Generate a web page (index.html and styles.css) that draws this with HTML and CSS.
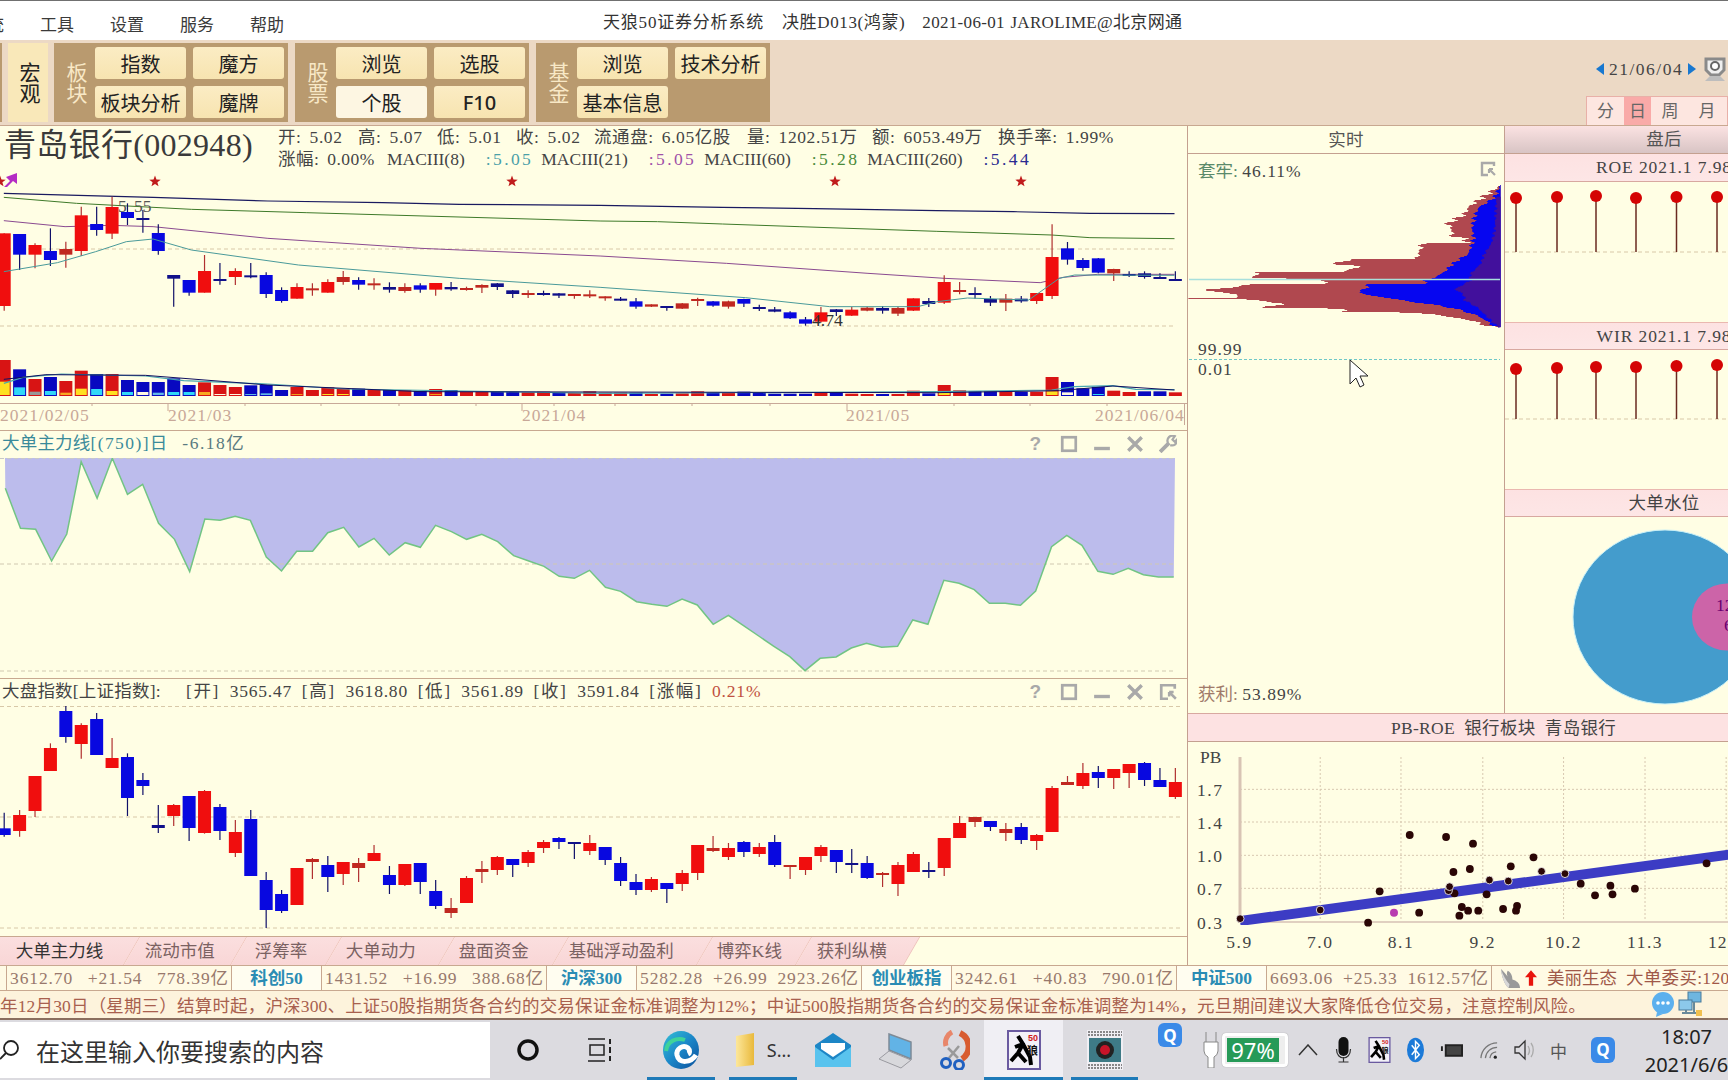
FILE: index.html
```html
<!DOCTYPE html>
<html lang="zh-CN">
<head>
<meta charset="utf-8">
<title>天狼50证券分析系统</title>
<link rel="stylesheet" href="styles.css">
</head>
<body>
<svg class="defs" width="0" height="0" aria-hidden="true">
  <defs>
    <linearGradient id="edgeGrad" x1="0" y1="0" x2="1" y2="1"><stop offset="0" stop-color="#35c1d6"/><stop offset=".5" stop-color="#1b86c8"/><stop offset="1" stop-color="#0c4f9a"/></linearGradient>
    <linearGradient id="folderGrad" x1="0" y1="0" x2="1" y2="0"><stop offset="0" stop-color="#fde79a"/><stop offset="1" stop-color="#e9b93c"/></linearGradient>
    <symbol id="wolf" viewBox="0 0 34 40">
      <rect x="1" y="1" width="32" height="38" fill="#f3f1f8" stroke="#6a5aa0" stroke-width="2"/>
      <path d="M11 6l5 8-5 9-7 8M16 14l7 13 1 8M11 23l8 9M16 14l-8 3" fill="none" stroke="#000" stroke-width="4"/>
      <text x="21" y="11" class="wolf-num">50</text>
      <text x="20" y="25" class="wolf-char">狼</text>
    </symbol>
    <symbol id="restore" viewBox="0 0 16 16">
      <path d="M14 5V2H2v12h6" fill="none" stroke="#a9a9a9" stroke-width="2.4"/>
      <path d="M9 8l6 6M9 8v4M9 8h4" fill="none" stroke="#a9a9a9" stroke-width="2.2"/>
    </symbol>
  </defs>
</svg>
<div class="page">
  <header class="menu">
    <nav class="menu-items"><span>系统</span><span>工具</span><span>设置</span><span>服务</span><span>帮助</span></nav>
    <div class="app-title"><span class="ta">天狼50证券分析系统</span><span class="tb">决胜D013(鸿蒙)</span><span class="tc">2021-06-01 JAROLIME@北京网通</span></div>
  </header>

  <section class="toolbar">
    <div class="sliver"></div>
    <button class="macro">宏观</button>
    <div class="group">
      <div class="group-label">板块</div>
      <button class="tbtn">指数</button><button class="tbtn">魔方</button>
      <button class="tbtn">板块分析</button><button class="tbtn">魔牌</button>
    </div>
    <div class="group">
      <div class="group-label">股票</div>
      <button class="tbtn">浏览</button><button class="tbtn">选股</button>
      <button class="tbtn active">个股</button><button class="tbtn latin">F10</button>
    </div>
    <div class="group">
      <div class="group-label">基金</div>
      <button class="tbtn">浏览</button><button class="tbtn">技术分析</button>
      <button class="tbtn">基本信息</button>
    </div>
    <div class="tool-right">
      <div class="date-row">
        <span class="arrow-left"></span><span class="date">21/06/04</span><span class="arrow-right"></span>
        <svg class="cal" viewBox="0 0 24 26"><path d="M3 3h18v11l-5 5H8l-5-5z" fill="#efefef" stroke="#8a8a8a" stroke-width="3"/><circle cx="12" cy="10" r="4" fill="#fff" stroke="#666" stroke-width="2"/><path d="M7 20l-5 5h20l-5-5" fill="#bdbdbd"/></svg>
      </div>
      <div class="periods"><span class="p1">分</span><span class="p2">日</span><span class="p3">周</span><span class="p4">月</span></div>
    </div>
  </section>

  <main class="main">
    <section class="left">
      <header class="stock-head">
        <h1 class="stock-name">青岛银行(002948)</h1>
        <div class="stock-info">
          <div class="stats">
            <span>开: 5.02</span><span>高: 5.07</span><span>低: 5.01</span><span>收: 5.02</span><span>流通盘: 6.05亿股</span><span>量: 1202.51万</span><span>额: 6053.49万</span><span>换手率: 1.99%</span>
          </div>
          <div class="macs">
            <span class="chg">涨幅: 0.00%</span>
            <span class="mac">MACIII(8)</span><span class="val v8">:5.05</span>
            <span class="mac">MACIII(21)</span><span class="val v21">:5.05</span>
            <span class="mac">MACIII(60)</span><span class="val v60">:5.28</span>
            <span class="mac">MACIII(260)</span><span class="val v260">:5.44</span>
          </div>
        </div>
      </header>
      <svg id="kline" class="chart c1" width="1187" height="260"></svg>

      <div class="panel-head">
        <span class="ptitle teal">大单主力线<span class="wide">[(750)]日</span> <em>-6.18亿</em></span>
        <div class="ptools">
          <span class="qmark">?</span>
          <svg viewBox="0 0 16 16"><rect x="2" y="2" width="12" height="12" fill="none" stroke="#a9a9a9" stroke-width="2.4"/></svg>
          <svg viewBox="0 0 16 16"><path d="M1 12h14" stroke="#a9a9a9" stroke-width="3"/></svg>
          <svg viewBox="0 0 16 16"><path d="M2 2l12 12M14 2L2 14" stroke="#a9a9a9" stroke-width="3"/></svg>
          <svg viewBox="0 0 16 16"><path d="M1 15l8-8" stroke="#a9a9a9" stroke-width="3.4"/><path d="M8 7a4.500 4.500 0 0 1 6-6l-2 3 2 2 2-2a4.500 4.500 0 0 1-6 5" fill="none" stroke="#a9a9a9" stroke-width="2"/></svg>
        </div>
      </div>
      <svg id="flow" class="chart" width="1187" height="220"></svg>

      <div class="panel-head">
        <span class="ptitle index-title"><span class="it-name">大盘指数[上证指数]:</span><span class="br">[开]</span><span class="num">3565.47</span><span class="br">[高]</span><span class="num">3618.80</span><span class="br">[低]</span><span class="num">3561.89</span><span class="br">[收]</span><span class="num">3591.84</span><span class="br">[涨幅]</span><b class="num">0.21%</b></span>
        <div class="ptools">
          <span class="qmark">?</span>
          <svg viewBox="0 0 16 16"><rect x="2" y="2" width="12" height="12" fill="none" stroke="#a9a9a9" stroke-width="2.4"/></svg>
          <svg viewBox="0 0 16 16"><path d="M1 12h14" stroke="#a9a9a9" stroke-width="3"/></svg>
          <svg viewBox="0 0 16 16"><path d="M2 2l12 12M14 2L2 14" stroke="#a9a9a9" stroke-width="3"/></svg>
          <svg viewBox="0 0 16 16"><use href="#restore"/></svg>
        </div>
      </div>
      <svg id="index" class="chart" width="1187" height="230"></svg>

      <div class="tabs">
        <div class="tab t1"><span class="on">大单主力线</span></div>
        <div class="tab t2"><span>流动市值</span></div>
        <div class="tab t3"><span>浮筹率</span></div>
        <div class="tab t4"><span>大单动力</span></div>
        <div class="tab t5"><span>盘面资金</span></div>
        <div class="tab t6"><span>基础浮动盈利</span></div>
        <div class="tab t7"><span>博弈K线</span></div>
        <div class="tab t8"><span>获利纵横</span></div>
      </div>
    </section>

    <section class="right">
      <div class="right-top">
        <div class="mid">
          <div class="head plain">实时</div>
          <div class="mid-row"><span class="trap">套牢: <i>46.11%</i></span><svg class="restore" viewBox="0 0 16 16"><use href="#restore"/></svg></div>
          <svg id="chips" class="chart" width="316" height="210"></svg>
          <div class="mid-row foot"><span class="profit">获利: <i>53.89%</i></span></div>
        </div>
        <div class="side">
          <div class="head grad">盘后</div>
          <div class="head wide-head">ROE 2021.1 7.98</div>
          <svg id="roe" class="chart" width="319" height="140"></svg>
          <div class="head wide-head">WIR 2021.1 7.98</div>
          <svg id="wir" class="chart" width="319" height="139"></svg>
          <div class="head">大单水位</div>
          <svg id="pie" class="chart" width="319" height="196"></svg>
        </div>
      </div>
      <div class="head pb">PB-ROE&nbsp;&nbsp;银行板块&nbsp;&nbsp;青岛银行</div>
      <svg id="scatter" class="chart" width="635" height="223"></svg>
    </section>
  </main>

  <section class="ticker">
    <div class="nums n1"><span>3612.70</span><span>+21.54</span><span>778.39亿</span></div>
    <div class="name w1">科创50</div>
    <div class="nums n2"><span>1431.52</span><span>+16.99</span><span>388.68亿</span></div>
    <div class="name w1">沪深300</div>
    <div class="nums n2"><span>5282.28</span><span>+26.99</span><span>2923.26亿</span></div>
    <div class="name w2">创业板指</div>
    <div class="nums n2"><span>3242.61</span><span>+40.83</span><span>790.01亿</span></div>
    <div class="name w1">中证500</div>
    <div class="nums n2"><span>6693.06</span><span>+25.33</span><span>1612.57亿</span></div>
    <div class="quote">
      <svg class="wing" viewBox="0 0 24 22"><path d="M2 1c1 8 3 15 8 20h12c0-5-4-8-8-9 0-4-2-8-5-9-1 2-1 4 0 6C7 6 4 3 2 1z" fill="#9a9a9a"/><path d="M2 1c1 8 3 15 8 20l1-4C7 13 4 7 2 1z" fill="#d8d8d8"/></svg>
      <svg class="up" viewBox="0 0 14 18"><path d="M7 0l7 8H9.500v10h-5V8H0z" fill="#e8140c"/></svg>
      <span class="q1">美丽生态</span><span class="q2">大单委买:120</span>
    </div>
  </section>

  <section class="notice">
    <p>年12月30日（星期三）结算时起，沪深300、上证50股指期货各合约的交易保证金标准调整为12%；中证500股指期货各合约的交易保证金标准调整为14%，元旦期间建议大家降低仓位交易，注意控制风险。</p>
    <div class="notice-icons">
      <svg viewBox="0 0 26 26"><circle cx="13" cy="12" r="11" fill="#5cb0ee"/><path d="M7 21l-1 5 7-3z" fill="#5cb0ee"/><circle cx="8" cy="12" r="1.800" fill="#fff"/><circle cx="13" cy="12" r="1.800" fill="#fff"/><circle cx="18" cy="12" r="1.800" fill="#fff"/></svg>
      <svg viewBox="0 0 26 26"><rect x="11" y="1" width="13" height="10" fill="#6fb6e0" stroke="#4a7a9a"/><rect x="2" y="9" width="13" height="10" fill="#8cc8ea" stroke="#4a7a9a"/><path d="M5 22h16M9 19v3M17 11v11" stroke="#6a8a9a" stroke-width="2"/><rect x="19" y="19" width="6" height="6" fill="#f0c050"/></svg>
    </div>
  </section>

  <footer class="taskbar">
    <div class="searchbox">
      <svg class="sicon" viewBox="0 0 20 20"><circle cx="11" cy="8" r="7" fill="none" stroke="#222" stroke-width="1.800"/><path d="M6 13l-6 6" stroke="#222" stroke-width="1.800"/></svg>
      <span>在这里输入你要搜索的内容</span>
    </div>
    <div class="slot s-cortana"><svg class="i24" viewBox="0 0 24 24"><circle cx="12" cy="12" r="9" fill="none" stroke="#111" stroke-width="3.500"/></svg></div>
    <div class="slot s-task"><svg class="i-task" viewBox="0 0 26 26"><path d="M1 2h17M1 24h17M3 8h14v10H3z" fill="none" stroke="#222" stroke-width="1.500"/><path d="M23 2v5M23 10v6M23 19v5" stroke="#222" stroke-width="2"/></svg></div>
    <div class="slot s-run"><svg class="i-edge" viewBox="0 0 36 38"><ellipse cx="18" cy="19" rx="18" ry="19" fill="url(#edgeGrad)"/><path d="M33 24c-5 8-17 9-19 0-1-6 6-11 11-7 2 2 2 5 0 6" fill="none" stroke="#fff" stroke-width="5"/><path d="M3 20C4 10 14 6 22 9" fill="none" stroke="#3fd39a" stroke-width="4"/></svg></div>
    <div class="slot s-run s-folder"><svg class="i-folder" viewBox="0 0 20 34"><path d="M1 3l18-3v32l-18 2z" fill="url(#folderGrad)"/></svg><span>S...</span></div>
    <div class="slot s-mail"><svg class="i-mail" viewBox="0 0 36 34"><path d="M18 0l18 12v22H0V12z" fill="#1d86c6"/><path d="M0 14l18 13 18-13v20H0z" fill="#59c3ee"/><path d="M6 10h24v6l-12 8-12-8z" fill="#fff"/></svg></div>
    <div class="slot s-laptop"><svg class="i-laptop" viewBox="0 0 34 38"><path d="M10 3l22 8v17L10 19z" fill="#62b3e6" stroke="#7e8a96" stroke-width="1.500"/><path d="M0 28l10-8 22 9-10 8z" fill="#d8d8dc" stroke="#9a9aa0"/></svg></div>
    <div class="slot s-scissors"><svg class="i-sc" viewBox="0 0 32 40"><path d="M22 3a15 15 0 0 1 2 26" fill="none" stroke="#d85c30" stroke-width="6"/><path d="M14 2a12 12 0 0 0-6 14" fill="none" stroke="#e8866a" stroke-width="5"/><path d="M10 18l10 10M21 16l-10 12" stroke="#999" stroke-width="2.500"/><circle cx="8" cy="33" r="4.500" fill="none" stroke="#2060c0" stroke-width="3"/><circle cx="21" cy="35" r="4.500" fill="none" stroke="#2060c0" stroke-width="3"/></svg></div>
    <div class="slot s-active"><svg class="i-wolf"><use href="#wolf"/></svg></div>
    <div class="slot s-film"><svg class="i-film" viewBox="0 0 36 40"><rect width="36" height="40" fill="#f0eff4"/><path d="M1 2h34M1 5h34M1 35h34M1 38h34" stroke="#666" stroke-width="1.500" stroke-dasharray="2 1"/><rect x="2" y="8" width="32" height="24" fill="#3e7a86"/><circle cx="18" cy="20" r="9" fill="#222"/><circle cx="18" cy="20" r="5" fill="#c81428"/></svg></div>
    <div class="qbadge big"><span>Q</span></div>
    <div class="tray">
      <svg class="i-plug" viewBox="0 0 16 36"><path d="M3 0v10M13 0v10M1 10h14v9a7 7 0 0 1-4 6v11H5V25a7 7 0 0 1-4-6z" fill="#fff" stroke="#888"/></svg>
      <div class="battery"><div class="batt-fill">97%</div></div>
      <svg class="i-caret" viewBox="0 0 20 12"><path d="M1 11l9-10 9 10" fill="none" stroke="#333" stroke-width="1.500"/></svg>
      <svg class="i-mic" viewBox="0 0 16 26"><rect x="3" y="0" width="10" height="19" rx="5" fill="#111"/><path d="M1 12c0 12 14 12 14 0M8 20v5M3 25h10" fill="none" stroke="#333" stroke-width="1.200"/></svg>
      <svg class="i-wolfs"><use href="#wolf"/></svg>
      <svg class="i-bt" viewBox="0 0 18 26"><ellipse cx="9" cy="13" rx="9" ry="13" fill="#1c7ad8"/><path d="M5 8l8 10-4 4V4l4 4-8 10" fill="none" stroke="#fff" stroke-width="1.500"/></svg>
      <svg class="i-smb" viewBox="0 0 24 16"><path d="M1 4v5h2V4zM5 2h19v13H5z" fill="#222"/><rect x="7" y="4" width="15" height="9" fill="#444"/></svg>
      <svg class="i-wifi" viewBox="0 0 20 20"><path d="M1 19A18 18 0 0 1 19 2M6 19A13 13 0 0 1 19 7M11 19a8 8 0 0 1 7-7" fill="none" stroke="#777" stroke-width="1.400"/><circle cx="17" cy="18" r="1.800" fill="#222"/></svg>
      <svg class="i-spk" viewBox="0 0 22 22"><path d="M2 8h4l6-6v18l-6-6H2z" fill="none" stroke="#333" stroke-width="1.300"/><path d="M15 7c2 3 2 6 0 9M18 4c3 4 3 10 0 14" fill="none" stroke="#aaa" stroke-width="1.300"/></svg>
      <span class="ime">中</span>
      <div class="qbadge"><span>Q</span></div>
    </div>
    <div class="clock"><span>18:07</span><span>2021/6/6</span></div>
  </footer>
</div>
<script src="charts.js"></script>
</body>
</html>
```
FILE: styles.css
```css
* { box-sizing: border-box; }
html, body { margin: 0; padding: 0; width: 1728px; height: 1080px; overflow: hidden; background: #fffee4; }
body { font-family: "Liberation Serif", "Noto Sans CJK SC", serif; font-size: 17.5px; color: #444; }
.defs { position: absolute; }
.page { width: 1728px; height: 1080px; overflow: hidden; display: flex; flex-direction: column; }
h1 { margin: 0; font-weight: 400; }
em, i { font-style: normal; }
button { font: inherit; border: 0; padding: 0; }
.wolf-num { font: 700 9px "Liberation Sans", sans-serif; fill: #d01818; }
.wolf-char { font: 700 11px "Noto Sans CJK SC", sans-serif; fill: #111; }

/* menu */
.menu { flex: 0 0 40px; display: flex; align-items: center; background: #fff; border-top: 1px solid #707070; font-size: 17px; color: #3a3a3a; padding-top: 6px; }
.menu-items { display: flex; gap: 36px; margin-left: -30px; width: 314px; flex: none; }
.menu-items span { white-space: nowrap; }
.app-title { margin-left: 319px; white-space: nowrap; color: #333; padding-bottom: 6px; font-size: 17px; display: flex; align-items: baseline; }
.ta { letter-spacing: .8px; }
.tb { letter-spacing: .62px; margin-left: 18px; }
.tc { letter-spacing: .32px; margin-left: 17px; word-spacing: 1px; }

/* toolbar */
.toolbar { flex: 0 0 85px; display: flex; align-items: stretch; gap: 6px; background: #ecd9c5; padding-top: 3px; padding-bottom: 3px; }
.sliver { width: 2px; background: #b99a6f; }
.macro { width: 40px; background: #f9e8b9; color: #222; font-size: 21px; writing-mode: vertical-rl; line-height: 40px; text-align: center; }
.group { display: grid; grid-template-columns: 41px 91px 98px; grid-template-rows: 32px 32px; row-gap: 7px; background: #b99a6f; padding: 4px 4px 4px 0; width: 234px; }
.group + .group { margin-left: 1px; }
.group .tbtn:nth-of-type(even) { margin-left: 7px; width: 91px; }
.group-label { grid-row: 1 / 3; color: #f8e8c6; font-size: 21px; writing-mode: vertical-rl; line-height: 41px; text-align: center; }
.tbtn { background: linear-gradient(#fbecc4, #f7e4b0); border-radius: 3px; color: #222; font-size: 20px; white-space: nowrap; }
.tbtn.active { background: #fdf6e2; }
.tbtn.latin { font-family: "Noto Sans", sans-serif; font-weight: 500; }
.tool-right { margin-left: auto; width: 142px; flex: none; display: flex; flex-direction: column; justify-content: flex-end; margin-bottom: -3px; }
.date-row { display: flex; align-items: center; gap: 5px; height: 28px; margin-bottom: 13px; margin-left: 10px; white-space: nowrap; }
.date { color: #444; letter-spacing: 1.5px; font-size: 17.5px; }
.arrow-left { width: 0; height: 0; border: 6px solid transparent; border-right: 8px solid #1878d0; border-left: 0; flex: none; }
.arrow-right { width: 0; height: 0; border: 6px solid transparent; border-left: 8px solid #1878d0; border-right: 0; flex: none; }
.cal { width: 24px; height: 26px; flex: none; margin-left: 2px; }
.periods { height: 29px; display: flex; border: 1px solid #e8b0a8; border-bottom: 0; background: #fde6e0; color: #666; line-height: 29px; text-align: center; font-size: 17px; }
.p1 { width: 37px; } .p2 { width: 27px; background: #f9aaa8; } .p3 { width: 38px; } .p4 { width: 36px; }

/* main */
.main { flex: 0 0 840px; width: 1823px; display: grid; grid-template-columns: 1188px 635px; border-top: 1px solid #c8a890; background: #fffee4; }
.chart { display: block; }
.chart text { font-family: "Liberation Serif", "Noto Sans CJK SC", serif; font-size: 17.5px; }
.left { border-right: 1px solid #c4a090; display: flex; flex-direction: column; min-width: 0; }
.stock-head { height: 44px; display: flex; }
.stock-name { font-size: 32px; line-height: 38px; width: 278px; flex: none; padding-left: 4px; color: #3a3a3a; white-space: nowrap; letter-spacing: .3px; }
.stock-info { line-height: 22px; }
.stats { display: grid; grid-template-columns: 80px 79px 79px 78px 153px 125px 126px auto; white-space: nowrap; word-spacing: 3px; letter-spacing: .6px; }
.macs { display: flex; white-space: nowrap; }
.chg { width: 109px; word-spacing: 3px; letter-spacing: .5px; }
.mac { margin-right: 21px; }
.val { margin-right: 8px; letter-spacing: 2.4px; }
.v8 { color: #4aa0a8; } .v21 { color: #a050a8; } .v60 { color: #4a8a3a; } .v260 { color: #2a2a90; }
.panel-head { height: 28px; border-top: 1px solid #c8a890; display: flex; align-items: center; white-space: nowrap; padding-left: 2px; letter-spacing: .2px; }
.ptitle { padding-bottom: 6px; }
.ptitle b { font-weight: 400; color: #c05040; }
.teal { color: #3a8a9a; }
.teal .wide { letter-spacing: 1.4px; }
.teal em { color: #5a7a80; margin-left: 9px; letter-spacing: 1.5px; }
.index-title { display: flex; align-items: baseline; }
.it-name { width: 184px; }
.br { letter-spacing: 1.6px; margin-right: 9.7px; }
.num { letter-spacing: .8px; margin-right: 9.7px; }
.ptools { margin-left: auto; display: flex; align-items: center; padding-right: 3px; padding-bottom: 2px; }
.ptools svg { width: 18px; height: 18px; margin: 0 7.5px; }
.qmark { width: 33px; text-align: center; color: #a9a9a9; font: 700 19px "Liberation Sans", sans-serif; }
.tabs { height: 29px; border-top: 1px solid #c8a890; display: flex; overflow: hidden; }
.tab { transform: skewX(-30deg); background: linear-gradient(#fbdfdf, #f9d6d6); border-right: 1px solid #eebcbc; height: 28px; display: flex; align-items: center; justify-content: center; font-size: 17.5px; color: #7a6262; padding-bottom: 4px; }
.tab span { transform: skewX(30deg); white-space: nowrap; display: block; }
.tab .on { color: #333; }
.t1 { width: 150px; margin-left: -18px; padding-left: 4px; } .t2 { width: 107px; padding-right: 13px; } .t3 { width: 95px; padding-right: 11px; } .t4 { width: 113px; padding-right: 20px; } .t5 { width: 114px; padding-right: 22px; } .t6 { width: 144px; padding-right: 24px; } .t7 { width: 99px; padding-right: 11px; } .t8 { width: 108px; padding-right: 13px; }

/* right */
.right { display: flex; flex-direction: column; min-width: 0; }
.right-top { display: grid; grid-template-columns: 316px 319px; height: 587px; }
.mid { display: flex; flex-direction: column; min-width: 0; }
.head { height: 28px; line-height: 27px; text-align: center; background: linear-gradient(#fde2e2, #fde6e6); border-bottom: 1px solid #d8a8a0; border-top: 1px solid #eab8b0; color: #444; white-space: nowrap; letter-spacing: .3px; }
.head.wide-head { letter-spacing: .9px; }
.head.plain { background: #fffee4; border-top: 0; border-bottom: 1px solid #c4a090; color: #555; line-height: 29px; }
.head.grad { background: linear-gradient(#fbe2e2, #d8c4c4); border-top: 0; border-bottom: 1px solid #c4a090; color: #555; }
.side .head:nth-of-type(2) { border-top: 0; }
.side { border-left: 1px solid #c4a090; min-width: 0; }
.mid-row { display: flex; justify-content: space-between; align-items: center; height: 30px; padding: 0 8px 0 10px; }
.trap { color: #5a8a6a; }
.trap i, .profit i { color: #444; letter-spacing: 1px; }
.profit { color: #a07a6a; }
.restore { width: 16px; height: 16px; }
.foot { margin-top: auto; height: 38px; padding: 0 8px 3px 10px; }
.head.pb { flex: none; height: 29px; line-height: 28px; background: #fde2e2; border-top: 1px solid #d8a8a0; border-bottom: 1px solid #c4a090; padding-right: 4px; }

/* ticker */
.ticker { flex: 0 0 26px; display: flex; background: #fffae4; border-top: 1px solid #c8a890; border-bottom: 1px solid #c8a890; line-height: 25px; white-space: nowrap; overflow: hidden; }
.nums { display: flex; justify-content: space-between; width: 225px; padding: 0 2px 0 3px; color: #98786c; border-left: 1px solid #c8a890; letter-spacing: .9px; flex: none; overflow: hidden; }
.n1 { margin-left: 6px; }
.name { color: #2a8cb4; text-align: center; font-size: 17.5px; font-weight: 700; border-left: 1px solid #c8a890; background: #fffdf0; flex: none; }
.w1, .w2 { width: 90px; }
.quote { border-left: 1px solid #c8a890; flex: 1; display: flex; align-items: center; padding-left: 7px; color: #a06a5c; min-width: 0; overflow: hidden; }
.wing { width: 23px; height: 21px; flex: none; }
.up { width: 12px; height: 16px; flex: none; margin-left: 3px; }
.q1 { margin-left: 10px; color: #a05848; }
.q2 { margin-left: 9px; color: #a05848; letter-spacing: .3px; }

/* notice */
.notice { flex: 0 0 29px; display: flex; align-items: center; background: #fdf3dc; border-bottom: 2px solid #8a6e5e; overflow: hidden; color: #a8604e; white-space: nowrap; }
.notice p { margin: 0; letter-spacing: .17px; }
.notice-icons { position: absolute; left: 1650px; top: 991px; display: flex; gap: 1px; }
.notice-icons svg { width: 26px; height: 26px; }

/* taskbar */
.taskbar { flex: 1; display: flex; background: #dcdbe0; align-items: stretch; position: relative; }
.searchbox { width: 490px; height: 56px; margin-top: 2px; background: #fff; display: flex; align-items: center; flex: none; color: #333; font: 24px "Noto Sans CJK SC", sans-serif; }
.sicon { width: 20px; height: 20px; margin-right: 16px; flex: none; }
.slot { flex: none; display: flex; align-items: center; justify-content: center; height: 60px; }
.s-cortana { width: 76px; } .i24 { width: 24px; height: 24px; }
.s-task { width: 68px; margin-right: 13px; } .i-task { width: 26px; height: 26px; }
.s-run { width: 68px; border-bottom: 3px solid #1e7ab8; padding-top: 3px; }
.s-folder { margin-left: 14px; gap: 12px; font: 18px "Noto Sans", sans-serif; color: #333; }
.i-edge { width: 36px; height: 38px; } .i-folder { width: 20px; height: 34px; }
.s-mail { width: 72px; } .i-mail { width: 36px; height: 34px; }
.s-laptop { width: 54px; } .i-laptop { width: 34px; height: 38px; }
.s-scissors { width: 61px; } .i-sc { width: 32px; height: 40px; }
.s-active { width: 79px; background: #f0eff4; border-bottom: 3px solid #1e7ab8; padding-top: 3px; } .i-wolf { width: 34px; height: 40px; }
.s-film { width: 67px; margin-left: 8px; border-bottom: 3px solid #1e7ab8; padding-top: 3px; } .i-film { width: 36px; height: 40px; }
.qbadge { width: 24px; height: 26px; background: #3a8ae8; border-radius: 6px; color: #fff; font: 700 17px "Noto Sans", sans-serif; text-align: center; line-height: 25px; flex: none; }
.qbadge.big { margin: 3px 0 0 20px; height: 24px; }
.tray { position: absolute; left: 1203px; top: 12px; height: 36px; display: flex; align-items: center; gap: 16px; }
.i-plug { width: 16px; height: 36px; }
.battery { width: 66px; height: 34px; margin-left: -13px; border: 3px solid #fff; border-radius: 4px; padding: 2px; background: #eee; box-shadow: 0 0 1px #888; }
.batt-fill { height: 100%; width: 52px; background: #269a58; color: #fff; font: 22px/24px "Noto Sans", sans-serif; text-align: center; white-space: nowrap; }
.i-caret { width: 20px; height: 12px; margin-left: -6px; margin-right: 1px; }
.i-mic { width: 17px; height: 26px; }
.i-wolfs { width: 23px; height: 26px; }
.i-bt { width: 17px; height: 26px; }
.i-smb { width: 23px; height: 16px; }
.i-wifi { width: 18px; height: 20px; margin-left: 1px; margin-right: -1px; }
.i-spk { width: 22px; height: 22px; }
.ime { font: 17px "Noto Sans CJK SC", sans-serif; color: #555; margin-left: -1px; }
.tray .qbadge { margin-left: 8px; }
.clock { position: absolute; left: 1645px; top: 3px; width: 83px; display: flex; flex-direction: column; align-items: center; font: 20px/28px "Noto Sans", sans-serif; color: #222; white-space: nowrap; }
```
FILE: charts.js
```js
var NS = 2.613;
var K1 = "r 190 190 408 422;b 192 192 254 300;r 220 225 254 295;b 175 243 270 288;r 215 237 254 293;r 110 136 243 258;b 110 162 180 197;r 80 111 191 207;b 100 126 144 165;b 120 144 149 188;b 163 189 243 254;b 315 315 326 410;b 330 330 368 377;r 255 303 368 368;b 279 327 329 344;r 295 303 321 345;b 279 316 321 325;b 307 315 372 384;b 352 360 393 398;r 340 351 386 386;r 340 355 358 377;r 328 336 368 368;r 303 321 336 344;b 322 330 344 359;r 325 340 344 359;b 337 351 359 368;r 340 351 363 368;b 340 346 359 368;r 339 339 359 377;b 336 351 358 362;r 350 354 358 362;r 343 345 353 369;b 339 340 351 360;b 360 361 372 384;r 361 369 372 384;b 362 369 372 377;b 369 370 377 384;r 372 372 376 386;r 361 373 377 384;r 379 379 383 392;b 381 386 390 393;b 384 394 410 416;r 403 403 410 411;b 408 408 411 422;r 399 400 416 417;r 383 387 392 408;b 393 394 407 410;r 392 394 410 416;b 386 387 401 411;b 404 411 415 423;b 411 418 425 427;b 424 427 445 447;b 441 448 461 467;r 411 427 455 458;b 417 418 426 438;r 411 419 437 438;r 410 413 422 424;b 408 414 422 431;r 410 414 431 438;r 385 385 422 423;b 384 393 402 411;r 316 336 398 402;r 336 360 362 373;b 352 369 372 386;b 378 387 398 408;r 372 386 398 423;b 378 386 394 398;r 369 369 393 402;r 163 261 378 387;b 216 235 269 284;b 264 270 294 302;b 264 265 308 310;r 296 297 310 333;b 304 312 314 321;b 304 310 321 326;b 310 321 325 327;b 304 327 329 331";
var K3 = "b 428 475 495 500;r 420 435 483 500;r 318 318 423 441;r 220 234 303 303;b 108 123 201 218;r 160 165 222 266;b 129 147 255 255;r 204 264 294 294;b 250 261 384 438;b 309 330 348 375;b 405 465 474 489;r 402 405 438 468;b 378 378 474 513;r 360 363 489 491;b 402 411 483 510;r 450 486 549 561;b 420 447 618 618;b 606 630 720 774;b 660 672 723 729;r 594 594 705 705;r 564 567 576 627;b 558 585 621 666;r 576 576 612 645;r 564 579 594 636;r 525 549 573 573;b 588 615 645 672;r 582 582 645 648;b 579 579 636 672;b 630 663 708 717;r 684 714 729 744;r 618 624 699 699;r 573 597 606 639;r 558 561 600 615;b 567 567 585 621;r 540 546 579 591;r 510 516 534 549;b 501 504 516 537;b 516 516 522 567;r 495 519 543 555;b 531 531 570 585;b 561 579 633 648;b 612 636 660 675;r 621 627 660 666;b 639 639 657 699;r 600 609 642 663;r 525 525 609 630;r 498 534 543 546;r 519 534 561 570;b 513 516 546 561;r 519 531 552 561;b 495 516 585 591;r 585 585 588 627;r 561 561 600 615;r 525 531 558 576;b 540 540 576 609;b 537 579 583 609;b 558 579 624 627;r 606 609 614 651;r 576 585 642 678;r 546 552 606 606;b 576 600 605 624;r 504 504 594 618;r 438 459 504 504;r 441 441 456 471;b 453 453 471 483;r 459 477 489 513;b 459 471 510 522;r 492 495 513 540;r 348 354 486 486;r 318 336 345 345;r 279 309 348 357;b 288 306 324 354;r 297 297 324 357;r 282 282 309 354;b 276 279 330 348;b 294 330 351 351;r 294 336 381 387";
var VOL = "r 570 y 635;b 598 c 652;r 627 g 665;b 621 c 663;r 633 o 668;r 602 y 656;b 612 c 657;r 612 y 663;b 630 c 666;b 636 w 666;b 636 l 668;b 625 c 666;b 645 c 666;r 637 o 666;r 645 w 672;r 651 w 672;b 646 l 672;b 645 l 670;b 660;r 651 y 673;r 660;r 652 y 672;r 657 y 672;b 656;r 660;b 660;r 660;b 663;r 657 y 673;b 660;r 664;r 665;b 665;b 665;r 667;r 665;b 668;r 669;r 664;r 668;r 668;b 668;r 672;b 671;r 670;r 664;b 668;r 668;b 665;b 667;b 671;b 671;b 671;r 668;b 667;r 671;r 672;b 672;r 672;r 662;b 670;r 645 y 666;r 661;b 664;b 664;r 664;b 665;r 665;r 621 y 664;b 636 w 667;b 655;b 650 c 672;r 662;r 666;b 664;b 664;r 667";
var FLOW = [7,175,27,295,47,298,68,393,88,312,107,95,128,205,148,85,168,193,188,163,209,280,230,328,250,425,270,267,290,271,310,259,330,271,351,381,371,423,391,364,412,364,432,308,453,292,473,351,493,325,513,375,534,338,554,352,574,286,595,305,615,328,635,313,656,335,677,377,697,393,717,409,737,439,757,445,777,421,798,472,818,484,839,515,859,523,879,529,899,507,919,525,940,583,960,556,980,587,1000,618,1020,649,1041,680,1061,722,1081,685,1102,681,1122,654,1142,640,1162,652,1183,649,1203,570,1223,583,1244,451,1264,460,1284,479,1304,520,1325,520,1345,526,1365,483,1386,350,1406,316,1426,346,1447,424,1467,433,1487,415,1507,434,1527,441,1547,441];

function cx(i) { return 4.2 + 15.41 * i; }
function f(n) { return Math.round(n * 100) / 100; }
function dash(y, w, c) { return '<line x1="0" x2="' + w + '" y1="' + y + '" y2="' + y + '" stroke="' + (c || '#d8c8a8') + '" stroke-dasharray="4 3"/>'; }
function candles(src, off) {
  return src.split(';').map(function (row, i) {
    var p = row.split(' '), c = p[0], h = +p[1] / 3 + off, t = +p[2] / 3 + off, b = +p[3] / 3 + off, l = +p[4] / 3 + off;
    var x = cx(i), tall = b - t, red = c === 'r';
    var body = red ? (tall < 6 ? '#c02820' : '#f00e0e') : (tall < 4 ? '#10108a' : '#0808e0');
    var wick = red ? '#b03030' : '#101068';
    if (tall < 2) tall = 2;
    return '<line x1="' + f(x) + '" x2="' + f(x) + '" y1="' + f(h) + '" y2="' + f(l) + '" stroke="' + wick + '" stroke-width="1.2"/>' +
      '<rect x="' + f(x - 6.5) + '" y="' + f(t) + '" width="13" height="' + f(tall) + '" fill="' + body + '"/>';
  }).join('');
}
function poly(pts, col, w) {
  var s = pts.map(function (p) { return f(p[0] / NS) + ',' + f(p[1] / 3); }).join(' ');
  return '<polyline points="' + s + '" fill="none" stroke="' + col + '" stroke-width="' + (w || 1) + '"/>';
}
function star(x, y, r, col) {
  var s = '';
  for (var i = 0; i < 10; i++) {
    var a = -Math.PI / 2 + i * Math.PI / 5, q = i % 2 ? r * 0.42 : r;
    s += f(x + q * Math.cos(a)) + ',' + f(y + q * Math.sin(a)) + ' ';
  }
  return '<polygon points="' + s + '" fill="' + col + '"/>';
}
function set(id, html) { document.getElementById(id).innerHTML = html; }

/* main K chart */
(function () {
  var h = dash(79, 1175) + dash(156, 1175);
  [155, 512, 835, 1021].forEach(function (x) { h += star(x, 11.5, 6, '#c01c1c'); });
  h += '<path d="M4 17l6-6-4-4 11-4v11l-4-3-6 6z" fill="#b42cc4"/>';
  h += star(0, 11.5, 6, '#c01c1c');
  h += poly([[10,70],[400,82],[700,93],[1000,98],[1200,103],[1568,106],[1888,112],[2128,116],[2448,122],[2648,125],[2848,130],[3069,131]], '#1a1a60', 1.2);
  h += poly([[10,82],[200,100],[500,118],[800,128],[1568,153],[1718,155],[1888,162],[2088,170],[2448,184],[2748,195],[2848,203],[3069,206]], '#3f7a2a', 1);
  h += poly([[10,152],[170,170],[290,166],[400,170],[700,205],[1100,235],[1568,258],[1898,280],[2268,310],[2468,325],[2718,338],[2778,322],[2868,313],[3069,313]], '#8a4a90', 1);
  h += candles(K1, 0);
  h += poly([[10,305],[150,278],[250,245],[330,215],[400,207],[500,240],[780,285],[1200,325],[1568,352],[1948,383],[2168,410],[2398,410],[2448,395],[2528,384],[2688,390],[2768,325],[2808,315],[3069,316]], '#4a9a9a', 1);
  h += '<text x="118" y="42" fill="#555">5</text><text x="134" y="42" fill="#555">55</text><text x="812" y="156" fill="#333" font-size="20">4.74</text>';
  var colors = { y: '#ffe020', c: '#30d8f8', g: '#989898', o: '#f8a820', w: '#fff8e0', l: '#60b8e8' };
  VOL.split(';').forEach(function (row, i) {
    var p = row.split(' '), x = cx(i) - 6.5, t = +p[1] / 3, base = 226;
    var col = p[0] === 'r' ? '#d81414' : '#0808c0';
    h += '<rect x="' + f(x) + '" y="' + f(t) + '" width="13" height="' + f(base - t) + '" fill="' + col + '"/>';
    if (p[2]) h += '<rect x="' + f(x + 1) + '" y="' + f(+p[3] / 3) + '" width="11" height="' + f(base - 1 - p[3] / 3) + '" fill="' + colors[p[2]] + '"/>';
  });
  h += poly([[10,640],[60,622],[160,612],[380,618],[480,632],[700,642],[900,657],[1568,670],[2448,665],[2748,660],[2808,650],[2908,647],[2968,658],[3069,659]], '#4aa8b0', 1.2);
  h += poly([[10,628],[120,614],[380,616],[700,645],[1100,665],[2448,668],[2768,662],[2908,648],[3069,660]], '#101060', 1);
  h += '<line x1="0" x2="1187" y1="233.500" y2="233.500" stroke="#c8a898"/>';
  [92,168,245,321,399,476,522,554,615,692,770,847,954,1030,1107].forEach(function (x) {
    var tall = x === 168 || x === 522 || x === 847;
    h += '<line x1="' + x + '" x2="' + x + '" y1="233" y2="' + (tall ? 241 : 236) + '" stroke="#c8a898"/>';
  });
  [['2021/02/05', 0], ['2021/03', 168], ['2021/04', 522], ['2021/05', 846], ['2021/06/04', 1095]].forEach(function (d) {
    h += '<text x="' + d[1] + '" y="251" fill="#c8a898" letter-spacing="1">' + d[0] + '</text>';
  });
  h += '<path d="M1184.500 233v22" stroke="#c8a898" fill="none"/>';
  set('kline', h);
})();

/* main-force area */
(function () {
  var pts = [];
  for (var i = 0; i < FLOW.length; i += 2) pts.push(f(FLOW[i] / 1.318) + ',' + f(FLOW[i + 1] / 3 - 28));
  var h = '<polygon points="5,0 ' + pts.join(' ') + ' 1175,0" fill="#bcbcec"/>';
  h += dash(0.5, 1175, '#c8c8c8') + dash(106, 1175, '#d0c8b0') + dash(213, 1175, '#d0c8b0');
  h += '<polyline points="' + pts.join(' ') + '" fill="none" stroke="#72c484" stroke-width="1.5"/>';
  set('flow', h);
})();

/* index K chart */
(function () {
  set('index', dash(0.5, 1180) + dash(111, 1180) + dash(222, 1180) + candles(K3, -36));
})();

/* chip distribution: stepped rows, interpolated with a repeatable jitter */
(function () {
  function jit(y, amp) { return amp * Math.sin(y * 12.9898) * Math.cos(y * 4.1414); }
  function steps(rows, col, amp, step) {
    var s = [], rx = f(917 / 2.86 - 8), last = rows[rows.length - 1][0], k = 0;
    for (var y = rows[0][0]; y < last; y += step) {
      while (rows[k + 1] && rows[k + 1][0] <= y) k++;
      var a = rows[k], b = rows[k + 1] || a;
      var t = b[0] === a[0] ? 0 : (y - a[0]) / (b[0] - a[0]);
      var jump = Math.abs(b[1] - a[1]) > 90;
      var x = Math.min(917, (jump ? a[1] : a[1] + (b[1] - a[1]) * t) + jit(y, amp));
      s.push(f(x / 2.86 - 8) + ',' + f(y / 3 - 54));
      s.push(f(x / 2.86 - 8) + ',' + f((y + step) / 3 - 54));
    }
    return '<polygon points="' + rx + ',' + f(rows[0][0] / 3 - 54) + ' ' + s.join(' ') + ' ' + rx + ',' + f(last / 3 - 54) + '" fill="' + col + '"/>';
  }
  var h = steps([[165,915],[230,825],[250,815],[283,760],[287,775],[318,780],[325,820],[337,695],[375,680],[385,490],[402,438],[406,500],[410,530],[418,470],[425,215],[430,230],[436,215],[440,200],[444,300],[448,415],[454,410],[462,210],[468,165],[478,75],[484,100],[492,165],[504,25],[507,185],[512,245],[520,300],[527,250],[532,400],[538,470],[545,620],[550,710],[556,750],[565,810],[575,850],[585,875],[592,917]], '#b0484f', 14, 3);
  h += steps([[165,915],[200,900],[215,880],[230,855],[250,845],[290,835],[325,840],[340,835],[370,825],[385,800],[400,780],[425,755],[440,730],[450,700],[460,540],[470,535],[486,510],[494,540],[505,610],[515,670],[525,740],[535,790],[545,820],[555,850],[570,875],[585,895],[592,917]], '#0606f0', 8, 3);
  h += steps([[200,905],[300,900],[340,890],[370,870],[400,860],[430,830],[450,830],[462,810],[476,785],[490,810],[510,815],[530,850],[560,880],[585,905],[592,917]], '#42109c', 5, 3);
  h += '<line x1="1" x2="312" y1="95.500" y2="95.500" stroke="#a8e0dc" stroke-width="1.500"/>';
  h += '<line x1="1" x2="312" y1="175.500" y2="175.500" stroke="#70c8c8" stroke-dasharray="3 2"/>';
  h += '<text x="10" y="171" fill="#444" letter-spacing="1">99.99</text><text x="10" y="191" fill="#444" letter-spacing="1">0.01</text>';
  h += '<path d="M162 176v24l6-6 4 9 4-2-4-9h8z" fill="#fff" stroke="#222" stroke-width="1"/>';
  set('chips', h);
})();

/* ROE / WIR lollipops */
(function () {
  var xs = [11, 52, 91, 131, 171.5, 212];
  function pops(tops, base) {
    var h = dash(base, 223);
    xs.forEach(function (x, i) {
      h += '<line x1="' + x + '" x2="' + x + '" y1="' + tops[i] + '" y2="' + base + '" stroke="#6a2a20" stroke-width="1.5"/>';
      h += '<circle cx="' + x + '" cy="' + tops[i] + '" r="6" fill="#d40404"/>';
    });
    return h;
  }
  set('roe', pops([16, 15, 14, 16, 15, 15], 70));
  set('wir', pops([19, 18, 17, 17, 16, 15], 69));
})();

/* water level */
set('pie', '<ellipse cx="160" cy="100" rx="92" ry="87" fill="#449ccc" stroke="#c8f0f8"/><ellipse cx="222" cy="100" rx="35" ry="33.500" fill="#cc64a8"/><text x="211" y="94" fill="#6a0070">12</text><text x="219" y="114" fill="#6a0070">6</text>');

/* PB-ROE scatter */
(function () {
  var X = function (z) { return f(z / 2.86 - 8); }, Y = function (z) { return f(z / 3 - 42); };
  var h = '';
  [268, 366, 466, 565, 665].forEach(function (z) { h += '<line x1="52" x2="635" y1="' + Y(z) + '" y2="' + Y(z) + '" stroke="#d8c8b0" stroke-dasharray="2 2"/>'; });
  [401, 632, 866, 1097, 1330, 1562].forEach(function (z) { h += '<line y1="15" y2="180" x1="' + X(z) + '" x2="' + X(z) + '" stroke="#d8c8b0" stroke-dasharray="2 2"/>'; });
  h += '<line x1="52" x2="52" y1="15" y2="181" stroke="#d8c4b4" stroke-width="3"/><line x1="52" x2="635" y1="180" y2="180" stroke="#e0d0c0" stroke-width="2"/>';
  h += '<clipPath id="plotClip"><rect x="52" y="0" width="600" height="183"/></clipPath>';
  h += '<line clip-path="url(#plotClip)" x1="52" y1="179" x2="560" y2="110" stroke="#3c3cc4" stroke-width="10"/>';
  [[1.7, 268], [1.4, 366], ['1.0', 466], [0.7, 565], [0.3, 665]].forEach(function (l) {
    h += '<text x="9" y="' + (Y(l[1]) + 7) + '" fill="#444" letter-spacing="1.5">' + l[0] + '</text>';
  });
  h += '<text x="12" y="21" fill="#444">PB</text>';
  [['5.9', 170], ['7.0', 401], ['8.1', 632], ['9.2', 866], ['10.2', 1097], ['11.3', 1330]].forEach(function (l) {
    h += '<text x="' + X(l[1]) + '" y="206" fill="#444" text-anchor="middle" letter-spacing="1.500">' + l[0] + '</text>';
  });
  h += '<text x="' + X(1510) + '" y="206" fill="#444" letter-spacing="1">12.</text>';
  var dots = [[172,656,1],[401,630,1],[571,574],[538,668],[684,638],[657,405],[761,411],[838,431],[829,507],[782,516],[785,580],[768,572,1],[771,560,1],[806,621],[824,632],[853,632],[799,647],[885,540,1],[877,583],[939,543,1],[946,499],[924,627],[961,632],[964,618],[1011,472],[1034,514,1],[1101,521,1],[1146,551],[1187,586],[1231,557],[1237,583],[1301,566],[1506,490]];
  dots.forEach(function (d) {
    h += '<circle cx="' + X(d[0]) + '" cy="' + Y(d[1]) + '" r="3.900" fill="#2a0606"' + (d[2] ? ' stroke="#fff" stroke-width=".8"' : '') + '/>';
  });
  h += '<circle cx="' + X(612) + '" cy="' + Y(638) + '" r="4" fill="#b83cb0"/>';
  set('scatter', h);
})();
```
